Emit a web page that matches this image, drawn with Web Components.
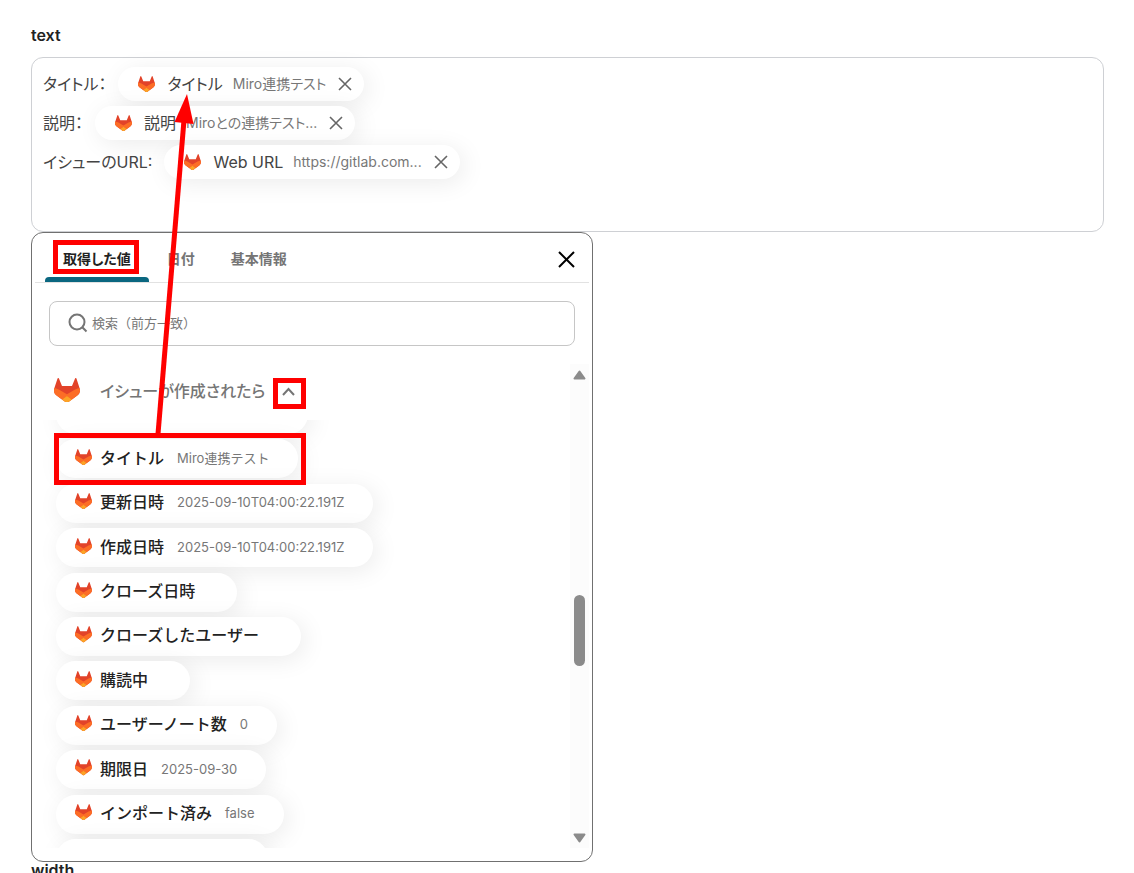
<!DOCTYPE html>
<html lang="ja">
<head>
<meta charset="utf-8">
<title>フィールド設定</title>
<style>
    body {
        margin: 0;
        height: 100vh;
        overflow: hidden;
        background: #fff;
        color: #222;
        font-family: Inter, "Noto Sans CJK JP", sans-serif;
        font-size: 16px;
    }
</style>
</head>
<body>
<field-page></field-page>

<script>
// 共通スタイル
const BASE = `
    *, *::before, *::after { box-sizing: border-box; }
    button {
        font: inherit;
        color: inherit;
        background: none;
        border: 0;
        padding: 0;
        margin: 0;
        cursor: pointer;
    }
    svg { display: block; }
`;

class FoxIcon extends HTMLElement {
    constructor() {
        super();
        this.attachShadow({ mode: 'open' }).innerHTML = `
            <style>
                :host { display: block; flex: none; width: var(--fox-size, 17px); }
                svg { display: block; width: 100%; }
            </style>
            <svg viewBox="0 0 25 24" aria-hidden="true">
                <path fill="#E24329" d="m24.507 9.5-.034-.09L21.6.562a.75.75 0 0 0-1.45.091L17.3 7.663H7.7L4.85.653A.75.75 0 0 0 3.4.563L.451 9.411.416 9.5a6.297 6.297 0 0 0 2.09 7.278l.042.032 9.274 6.978a1.051 1.051 0 0 0 1.268 0l9.312-7.001.014-.01A6.297 6.297 0 0 0 24.507 9.5Z"/>
                <path fill="#FC6D26" d="M.416 9.5C2.2 9.8 3.7 10.400 5 11.200L12.460 15.600 19.900 11.200c1.400-.8 2.900-1.400 4.600-1.700a6.297 6.297 0 0 1-2.090 7.277L17.205 20.677 12.460 17.600 7.707 20.677 2.506 16.778A6.297 6.297 0 0 1 .416 9.500Z"/>
                <path fill="#FCA326" d="m7.707 20.677 4.115 3.111a1.051 1.051 0 0 0 1.268 0l4.115-3.111-4.743-3.277-4.755 3.277Z"/>
            </svg>
        `;
    }
}

// 入力欄に挿入された値
class ValueToken extends HTMLElement {
    constructor() {
        super();
        this.attachShadow({ mode: 'open' }).innerHTML = `
            <style>
                ${BASE}
                :host {
                    display: flex;
                    align-items: center;
                    height: 34px;
                    padding: 0 12px 0 20px;
                    border-radius: 17px;
                    background: #fff;
                    box-shadow: 4px 4px 24px rgba(0, 0, 0, 0.08);
                    white-space: nowrap;
                }
                .name { margin: 0 10px 0 12px; }
                .value { font-size: 14px; color: #777; }
                button { margin-left: 12px; }
            </style>
            <fox-icon></fox-icon>
            <span class="name"><slot></slot></span>
            <span class="value"><slot name="value"></slot></span>
            <button type="button" aria-label="削除">
                <svg width="14" height="14" viewBox="0 0 14 14" fill="none" stroke="#666" stroke-width="1.6"><path d="M1 1l12 12M13 1L1 13"/></svg>
            </button>
        `;
    }
}

class TokenEditor extends HTMLElement {
    constructor() {
        super();
        this.attachShadow({ mode: 'open' }).innerHTML = `
            <style>
                ${BASE}
                :host {
                    display: flex;
                    flex-direction: column;
                    gap: 5px;
                    box-sizing: border-box;
                    min-height: 175px;
                    padding: 9px 11px;
                    border: 1px solid #ced0d4;
                    border-radius: 12px;
                    color: #444;
                    font-feature-settings: "palt";
                }
                .line { display: flex; align-items: center; gap: 12px; line-height: 24px; }
            </style>
            <div class="line"><span>タイトル：</span><value-token>タイトル<span slot="value">Miro連携テスト</span></value-token></div>
            <div class="line"><span>説明：</span><value-token>説明<span slot="value">Miroとの連携テスト...</span></value-token></div>
            <div class="line"><span>イシューのURL:</span><value-token>Web URL<span slot="value">https://gitlab.com...</span></value-token></div>
        `;
    }
}

// 候補リストの1項目
class ValueOption extends HTMLElement {
    constructor() {
        super();
        this.attachShadow({ mode: 'open' }).innerHTML = `
            <style>
                ${BASE}
                :host { display: block; }
                button {
                    display: flex;
                    align-items: center;
                    min-width: var(--option-width, 0);
                    height: 39px;
                    padding: 0 29px 4px 19px;
                    border-radius: 20px;
                    background: #fff;
                    box-shadow: 4px 4px 24px rgba(0, 0, 0, 0.08);
                    white-space: nowrap;
                }
                .name { margin: 0 13px 0 8px; font-weight: 500; color: #222; }
                .value { padding-top: 2px; font-size: 13px; color: #777; }
                .empty fox-icon { visibility: hidden; }
            </style>
            <button type="button">
                <fox-icon></fox-icon>
                <span class="name"><slot></slot></span>
                <span class="value"><slot name="value"></slot></span>
            </button>
        `;
    }

    connectedCallback() {
        // 見切れている項目はアイコンを出さない
        if (!this.textContent) {
            this.shadowRoot.querySelector('button').classList.add('empty');
        }
    }
}

class PickerTabs extends HTMLElement {
    constructor() {
        super();
        this.attachShadow({ mode: 'open' }).innerHTML = `
            <style>
                ${BASE}
                :host {
                    display: flex;
                    justify-content: space-between;
                    align-items: stretch;
                    box-sizing: border-box;
                    height: 50px;
                    margin: 0 3px;
                    padding: 0 14px 0 10px;
                    border-bottom: 1px solid #e2e2e2;
                }
                .tabs { display: flex; font-feature-settings: "palt"; }
                .tab {
                    display: flex;
                    flex-direction: column;
                    justify-content: space-between;
                    padding: 16px 0 0;
                    font-size: 14px;
                    font-weight: 700;
                    line-height: 20px;
                    color: #757575;
                }
                .tab span { padding: 0 18px; }
                .tab[aria-selected="true"] { color: #222; }
                .tab[aria-selected="true"]::after {
                    content: "";
                    align-self: stretch;
                    height: 5px;
                    border-radius: 4px 4px 0 0;
                    background: #0a6780;
                }
                .close { padding-top: 4px; }
            </style>
            <div class="tabs" role="tablist">
                <button class="tab" role="tab" aria-selected="true"><span>取得した値</span></button>
                <button class="tab" role="tab" aria-selected="false"><span>日付</span></button>
                <button class="tab" role="tab" aria-selected="false"><span>基本情報</span></button>
            </div>
            <button class="close" type="button" aria-label="閉じる">
                <svg width="17" height="17" viewBox="0 0 17 17" fill="none" stroke="#000" stroke-width="2"><path d="M1 1l15 15M16 1L1 16"/></svg>
            </button>
        `;
    }
}

class PickerSearch extends HTMLElement {
    constructor() {
        super();
        this.attachShadow({ mode: 'open' }).innerHTML = `
            <style>
                ${BASE}
                :host { display: block; margin: 18px 17px; }
                label {
                    display: flex;
                    align-items: center;
                    gap: 4px;
                    height: 45px;
                    padding: 0 18px 2px;
                    border: 1px solid #c6c6c6;
                    border-radius: 8px;
                }
                input {
                    flex: 1;
                    min-width: 0;
                    padding: 0;
                    border: 0;
                    outline: 0;
                    background: none;
                    font: inherit;
                    font-size: 13px;
                }
                input::placeholder { color: #777; opacity: 1; }
            </style>
            <label>
                <svg width="20" height="20" viewBox="0 0 20 20" fill="none" stroke="#757575" stroke-width="2"><circle cx="9" cy="9" r="7.5"/><path d="M14.3 14.3L18.5 18.5"/></svg>
                <input type="text" placeholder="検索（前方一致）" aria-label="検索">
            </label>
        `;
    }
}

class ValueList extends HTMLElement {
    constructor() {
        super();
        this.attachShadow({ mode: 'open' }).innerHTML = `
            <style>
                ${BASE}
                :host { display: flex; height: 484px; margin: 0 3px 13px 1px; }
                .main { flex: 1; min-width: 0; display: flex; flex-direction: column; }
                .heading {
                    display: flex;
                    align-items: center;
                    flex: none;
                    height: 56px;
                    padding: 0 21px 4px;
                    font-weight: 500;
                    font-feature-settings: "palt";
                    color: #757575;
                    --fox-size: 26px;
                }
                .heading span { margin: 0 17px 0 20px; }
                .heading button { padding-top: 3px; }
                .items { flex: 1; min-height: 0; overflow: hidden; }
                .stack {
                    display: flex;
                    flex-direction: column;
                    justify-content: space-between;
                    align-items: flex-start;
                    height: 483px;
                    padding-left: 23px;
                }
                .first { --option-width: 252px; }
                .last { --option-width: 212px; }
                .scrollbar {
                    display: flex;
                    flex-direction: column;
                    align-items: center;
                    width: 19px;
                    padding: 6px 0 5px;
                    background: #fcfcfc;
                }
                .thumb { width: 11px; height: 71px; margin: 215px 0 auto; border-radius: 6px; background: #8b8b8b; }
            </style>
            <div class="main">
                <div class="heading">
                    <fox-icon></fox-icon>
                    <span>イシューが作成されたら</span>
                    <button type="button" aria-label="折りたたむ">
                        <svg width="13" height="9" viewBox="0 0 13 9" fill="none" stroke="#757575" stroke-width="2"><path d="M1 8l5.500-6L12 8"/></svg>
                    </button>
                </div>
                <div class="items">
                    <div class="stack">
                        <value-option class="first"></value-option>
                        <value-option>タイトル<span slot="value">Miro連携テスト</span></value-option>
                        <value-option>更新日時<span slot="value">2025-09-10T04:00:22.191Z</span></value-option>
                        <value-option>作成日時<span slot="value">2025-09-10T04:00:22.191Z</span></value-option>
                        <value-option>クローズ日時</value-option>
                        <value-option>クローズしたユーザー</value-option>
                        <value-option>購読中</value-option>
                        <value-option>ユーザーノート数<span slot="value">0</span></value-option>
                        <value-option>期限日<span slot="value">2025-09-30</span></value-option>
                        <value-option>インポート済み<span slot="value">false</span></value-option>
                        <value-option class="last"></value-option>
                    </div>
                </div>
            </div>
            <div class="scrollbar">
                <svg width="13" height="10" viewBox="0 0 13 10"><path d="M6.500 1.500L11.500 8.500H1.500Z" fill="#8b8b8b" stroke="#8b8b8b" stroke-width="2" stroke-linejoin="round"/></svg>
                <div class="thumb"></div>
                <svg width="13" height="10" viewBox="0 0 13 10"><path d="M6.500 8.500L11.500 1.500H1.500Z" fill="#8b8b8b" stroke="#8b8b8b" stroke-width="2" stroke-linejoin="round"/></svg>
            </div>
        `;
    }

    connectedCallback() {
        // 途中までスクロールした状態で表示
        this.shadowRoot.querySelector('.items').scrollTop = 25;
    }
}

class ValuePicker extends HTMLElement {
    constructor() {
        super();
        this.attachShadow({ mode: 'open' }).innerHTML = `
            <style>
                :host {
                    display: block;
                    box-sizing: border-box;
                    max-width: 562px;
                    border: 1px solid #707070;
                    border-radius: 12px;
                    background: #fff;
                }
            </style>
            <picker-tabs></picker-tabs>
            <picker-search></picker-search>
            <value-list></value-list>
        `;
    }
}

// 操作手順を示す赤枠と矢印
class GuideMarks extends HTMLElement {
    constructor() {
        super();
        this.attachShadow({ mode: 'open' }).innerHTML = `
            <style>
                :host { position: absolute; left: 0; top: 0; pointer-events: none; }
                svg { display: block; }
            </style>
            <svg width="600" height="500" viewBox="0 0 600 500" fill="none" stroke="#f00" stroke-width="5" aria-hidden="true">
                <rect x="55.500" y="242.500" width="81" height="29"/>
                <rect x="275.500" y="380.500" width="28" height="26"/>
                <rect x="56.500" y="435.500" width="247" height="47"/>
                <path d="M158 434L184 120"/>
                <path d="M187 94L193.500 124L174.500 122Z" fill="#f00" stroke="none"/>
            </svg>
        `;
    }
}

class FieldPage extends HTMLElement {
    constructor() {
        super();
        this.attachShadow({ mode: 'open' }).innerHTML = `
            <style>
                :host { display: block; padding: 27px 30px 0 31px; }
                .label { font-weight: 600; line-height: 16px; }
                token-editor { margin-top: 14px; }
            </style>
            <div class="label">text</div>
            <token-editor></token-editor>
            <value-picker></value-picker>
            <div class="label">width</div>
            <guide-marks></guide-marks>
        `;
    }
}

customElements.define('fox-icon', FoxIcon);
customElements.define('value-token', ValueToken);
customElements.define('token-editor', TokenEditor);
customElements.define('value-option', ValueOption);
customElements.define('picker-tabs', PickerTabs);
customElements.define('picker-search', PickerSearch);
customElements.define('value-list', ValueList);
customElements.define('value-picker', ValuePicker);
customElements.define('guide-marks', GuideMarks);
customElements.define('field-page', FieldPage);
</script>
</body>
</html>
